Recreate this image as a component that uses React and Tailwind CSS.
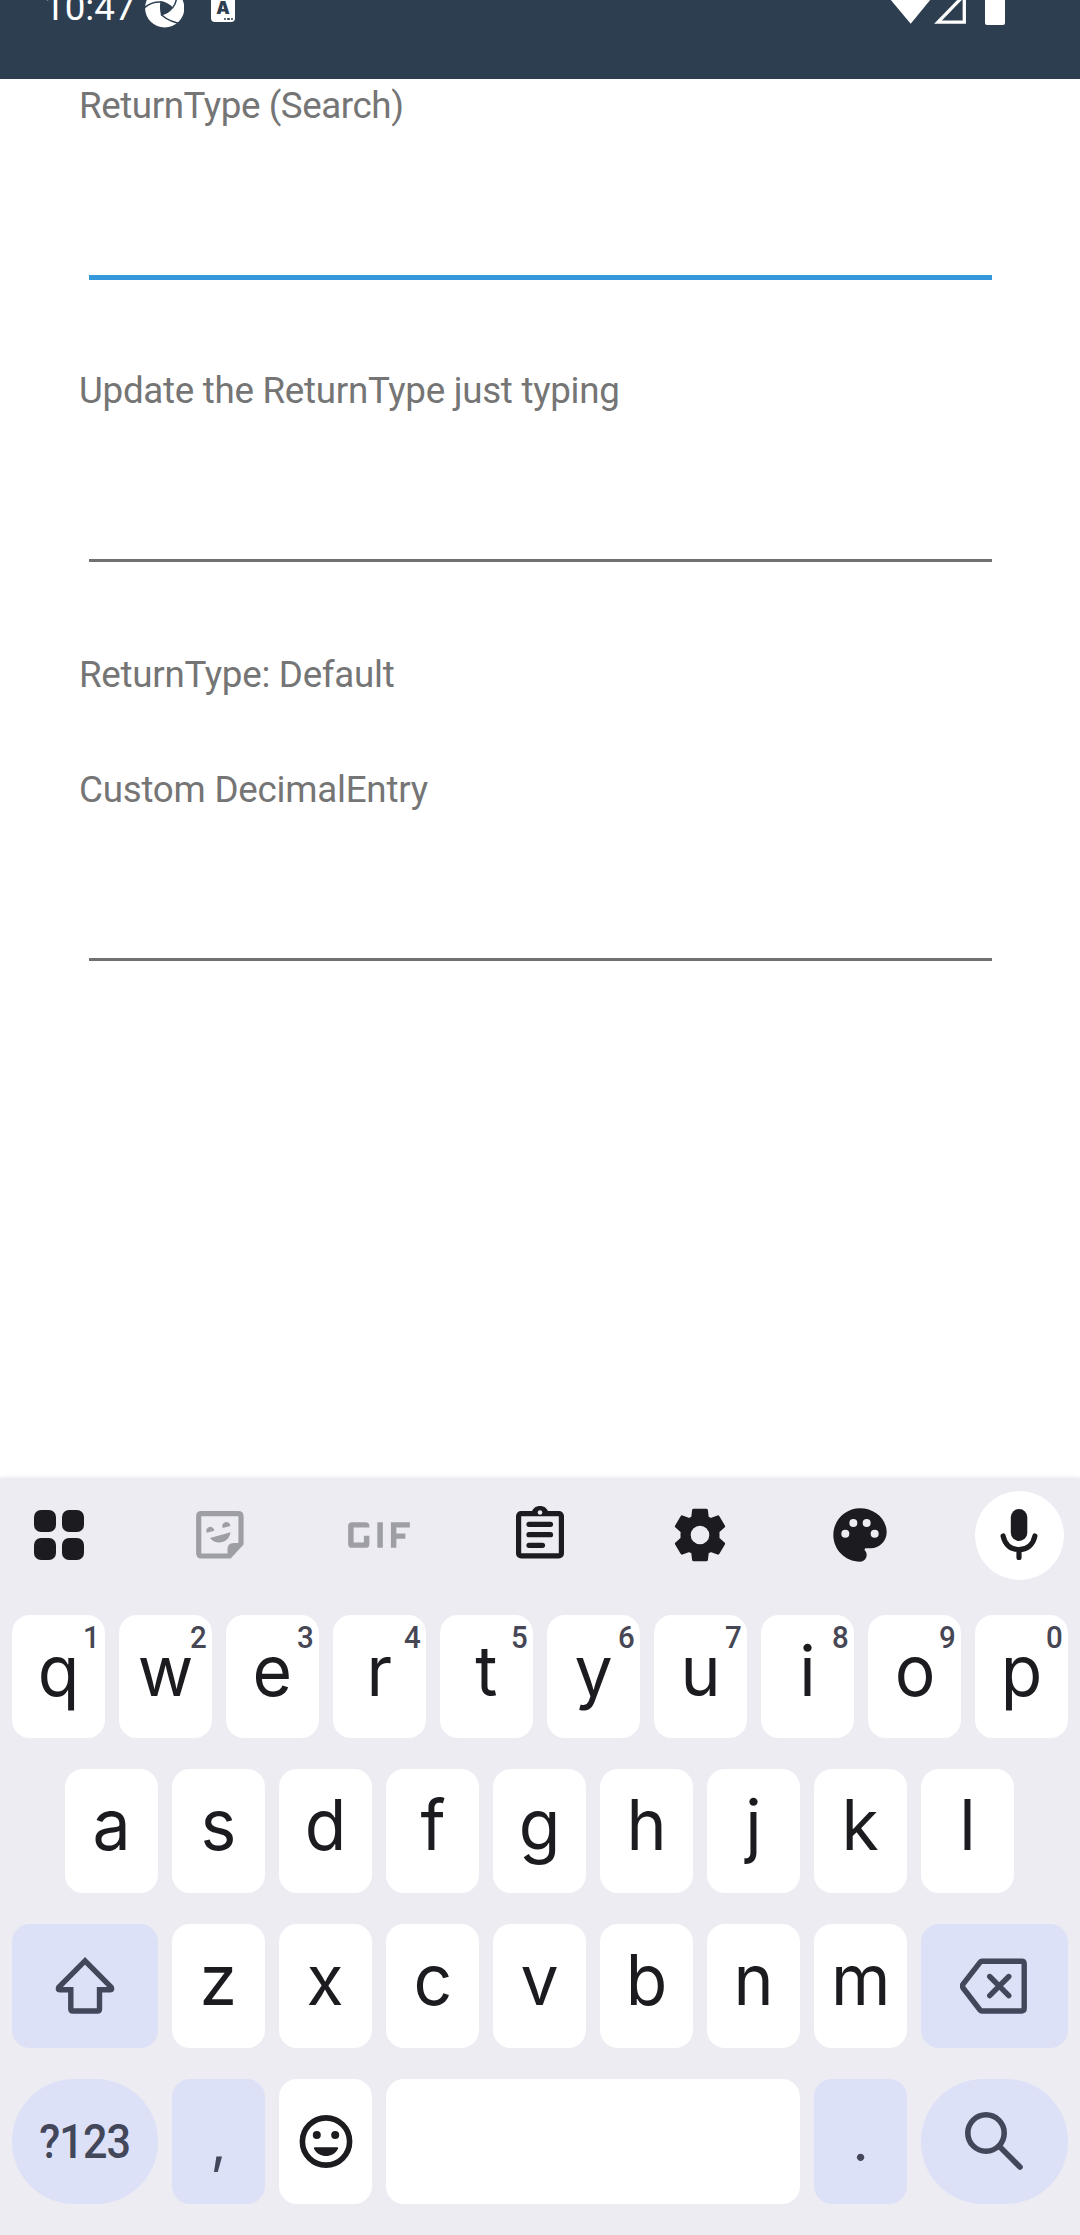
import { MdGif } from "react-icons/md";

const DARK = "#1b1b20";
const SLATE = "#43475a";
const MUTED = "#9e9fa5";

function StatusBar() {
  return (
    <header className="relative flex h-[79px] w-full shrink-0 items-start overflow-hidden bg-[#2d3e50] text-white">
      <span className="-mt-[14px] ml-[44px] w-[101px] shrink-0 text-[36.75px] leading-[43px]">10:47</span>
      <svg className="h-7 w-[39px] shrink-0" viewBox="145 0 39 28">
        <circle cx="164.7" cy="8" r="19.6" fill="#fff" />
        <g fill="none" stroke="#2d3e50" strokeWidth="1.5">
          <path d="M161 14.500 C166 19 172 23 184 24" />
          <path d="M172.500 8 C175 5 176.500 1 176.500 -3" />
          <path d="M161 2 C155 1.500 150 3 144 8" />
        </g>
        <path d="M160.500 1 C165 1.500 170 4 173 8 C170 12 166 14.500 161 15.500 C160 11 159.500 6 160.500 1 Z" fill="#2d3e50" />
      </svg>
      <div className="relative ml-[27px] h-[22px] w-6 shrink-0 overflow-hidden rounded-b-sm bg-white text-center font-[Inter,sans-serif] text-[17px] font-black leading-[16px] text-[#2d3e50]">
        <span className="block h-[17px]">A</span>
        <span className="absolute bottom-[2px] right-[2px] flex gap-[1px]">
          <i className="size-[2.500px] rounded-full bg-[#2d3e50]" />
          <i className="size-[2.500px] rounded-full bg-[#2d3e50]" />
          <i className="size-[2.500px] rounded-full bg-[#2d3e50]" />
        </span>
      </div>
      <svg className="ml-auto mr-[74px] h-[26px] w-[116px] shrink-0" viewBox="890 0 116 26">
        <path d="M890 -1 H931 L910.700 23.800 Z" fill="#fff" />
        <path d="M938 22.200 H964.300 V-5 Z" fill="none" stroke="#fff" strokeWidth="3.300" />
        <rect x="985" y="-10" width="20" height="35" rx="2" fill="#fff" />
      </svg>
    </header>
  );
}

function Grid() {
  return (
    <svg width="50" height="50" viewBox="0 0 50 50" fill={DARK}>
      <rect width="22" height="22" rx="7" />
      <rect x="28" width="22" height="22" rx="7" />
      <rect y="28" width="22" height="22" rx="7" />
      <rect x="28" y="28" width="22" height="22" rx="7" />
    </svg>
  );
}

function Sticker() {
  return (
    <svg width="48" height="48" viewBox="0 0 48 48" fill={MUTED}>
      <path d="M5.500 2.700 H42 Q45 2.700 45 5.500 V32.500 L33.500 45 H5.500 Q2.700 45 2.700 42 V5.500 Q2.700 2.700 5.500 2.700 Z" fill="none" stroke={MUTED} strokeWidth="5.200" />
      <path d="M31.500 45 V38 Q31.500 32 37.500 32 H46 L34 46 Z" />
      <path d="M10.800 21.800 A4 4 0 1 1 18.300 19.800 Z" />
      <path d="M26.800 17 A4 4 0 1 1 34.300 15 Z" />
      <path d="M14 27 L34.500 21.300 C33.500 32 20 35 14 27 Z" />
    </svg>
  );
}

function Clipboard() {
  return (
    <svg width="48" height="53" viewBox="0 0 48 53" fill="none" stroke={DARK}>
      <rect x="2.600" y="7.600" width="42.800" height="42.300" rx="2.500" strokeWidth="5.200" />
      <path d="M15.500 6.500 C17 2 20 0 24 0 C28 0 31 2 32.500 6.500 Z" fill={DARK} stroke="none" />
      <circle cx="24" cy="6.500" r="2.300" fill="#edecf3" stroke="none" />
      <path d="M13 18.300 H34.500 M13 28.700 H34.500 M13 39.300 H26.500" strokeWidth="5.200" strokeLinecap="round" />
    </svg>
  );
}

function Gear() {
  return (
    <svg width="54" height="54" viewBox="-27 -27 54 54">
      <path
        d="M-6.300 -24.700 H6.300 L7.200 -17.500 L10.500 -15.300 L18 -18 L23.500 -8.600 L17.900 -3.800 V3.800 L23.500 8.600 L18 18 L10.500 15.300 L7.200 17.500 L6.300 24.700 H-6.300 L-7.200 17.500 L-10.500 15.300 L-18 18 L-23.500 8.600 L-17.900 3.800 V-3.800 L-23.500 -8.600 L-18 -18 L-10.500 -15.300 L-7.200 -17.500 Z"
        fill={DARK}
        stroke={DARK}
        strokeWidth="3.200"
        strokeLinejoin="round"
      />
      <circle r="9.300" fill="#edecf3" />
    </svg>
  );
}

function Palette() {
  return (
    <svg width="64" height="64" viewBox="0 0 24 24" fill={DARK}>
      <path d="M12 2C6.490 2 2 6.490 2 12s4.490 10 10 10c1.380 0 2.500-1.120 2.500-2.500 0-.610-.230-1.200-.640-1.670-.080-.100-.130-.210-.130-.330 0-.280.220-.500.500-.500H16c3.310 0 6-2.690 6-6C22 6.040 17.510 2 12 2z" />
      <g fill="#edecf3">
        <circle cx="6.500" cy="11.500" r="1.500" />
        <circle cx="9.500" cy="7.500" r="1.500" />
        <circle cx="14.500" cy="7.500" r="1.500" />
        <circle cx="17.500" cy="11.500" r="1.500" />
      </g>
    </svg>
  );
}

function Mic() {
  return (
    <svg width="38" height="52" viewBox="0 0 38 52" fill="none" stroke={DARK} strokeWidth="5.200" strokeLinecap="round">
      <rect x="10.800" y="0" width="16.500" height="32" rx="8.200" fill={DARK} stroke="none" />
      <path d="M3.100 27 C5 36 11 40.500 19 40.500 C27 40.500 33 36 34.900 27 M19 41 V48.500" />
    </svg>
  );
}

function Shift() {
  return (
    <svg width="60" height="60" viewBox="55 1956 60 60" fill="none" stroke={SLATE} strokeWidth="5.400">
      <path d="M85 1960.800 L58.700 1987.300 Q57.500 1989.800 59.700 1989.800 H70.800 V2009 q0 2 2 2 H97.500 q2 0 2 -2 V1989.800 H110.300 Q112.500 1989.800 111.300 1987.300 Z" />
    </svg>
  );
}

function Backspace() {
  return (
    <svg width="70" height="60" viewBox="959.500 1956 70 60" fill="none" stroke={SLATE} strokeWidth="5.400" strokeLinecap="round" strokeLinejoin="round">
      <path d="M981.500 1961.300 H1021 Q1023.700 1961.300 1023.700 1964 V2008.300 Q1023.700 2011 1021 2011 H981.500 Q980.300 2011 979.500 2010 L962.600 1988 Q961.200 1986 962.600 1984.200 L979.500 1962.300 Q980.300 1961.300 981.500 1961.300 Z" />
      <path d="M989.200 1976.500 L1008.300 1995.700 M1008.300 1976.500 L989.200 1995.700" />
    </svg>
  );
}

function Smiley() {
  return (
    <svg width="54" height="54" viewBox="-27 -26.500 54 54" fill={DARK}>
      <circle r="23.600" fill="none" stroke={DARK} strokeWidth="5.600" />
      <circle cx="-9.200" cy="-6.500" r="4" />
      <circle cx="9.200" cy="-6.500" r="4" />
      <path d="M-11.200 5.700 H11.200 Q12.800 5.700 12 7.300 C7 17 -7 17 -12 7.300 Q-12.800 5.700 -11.200 5.700 Z" />
    </svg>
  );
}

function Search() {
  return (
    <svg width="60" height="60" viewBox="965 2112 60 60" fill="none" stroke={SLATE} strokeWidth="5.600" strokeLinecap="round">
      <circle cx="986" cy="2133" r="18.200" />
      <path d="M999.500 2146.500 L1020 2167" />
    </svg>
  );
}

function Key({ label, hint }) {
  return (
    <div className="relative flex h-full w-[93px] shrink-0 justify-center rounded-[18px] bg-white font-[Inter,sans-serif] text-[70px] leading-[112px] text-[#1b1b20]">
      <span className="inline-block origin-center scale-x-[.97]">{label}</span>
      {hint && (
        <span className="absolute right-[5px] top-[6px] origin-right scale-x-[.95] font-[Roboto,sans-serif] text-[31px] font-medium leading-[34px] text-[#464654]">{hint}</span>
      )}
    </div>
  );
}

const TOP_ROW = ["q", "w", "e", "r", "t", "y", "u", "i", "o", "p"];

function Keyboard() {
  return (
    <section className="flex h-[757px] w-full shrink-0 flex-col bg-[#edecf3] shadow-[0_0_5px_rgba(0,0,0,0.1)]">
      <div className="flex h-[114px] w-full items-center justify-between pl-[14px] pr-[16px]">
        <div className="flex w-[89px] justify-center"><Grid /></div>
        <div className="flex w-[89px] justify-center pl-[2px]"><Sticker /></div>
        <div className="flex w-[89px] justify-center"><MdGif className="size-[108px] shrink-0" color={MUTED} stroke="#edecf3" style={{ strokeWidth: 0.28 }} /></div>
        <div className="flex w-[89px] justify-center pb-[5px] pl-[2px]"><Clipboard /></div>
        <div className="flex w-[89px] justify-center pl-[2px]"><Gear /></div>
        <div className="flex w-[89px] justify-center pl-[1px]"><Palette /></div>
        <div className="flex size-[89px] items-center justify-center rounded-full bg-white"><Mic /></div>
      </div>
      <div className="mt-[23px] flex h-[123px] gap-[14px] px-[12px]">
        {TOP_ROW.map((k, i) => (
          <Key key={k} label={k} hint={String((i + 1) % 10)} />
        ))}
      </div>
      <div className="mt-[31px] flex h-[124px] gap-[14px] pl-[65px]">
        {["a", "s", "d", "f", "g", "h", "j", "k", "l"].map((k) => (
          <Key key={k} label={k} />
        ))}
      </div>
      <div className="mt-[31px] flex h-[124px] gap-[14px] px-[12px]">
        <div className="flex w-[146px] items-center justify-center rounded-[18px] bg-[#dde1f8]"><Shift /></div>
        {["z", "x", "c", "v", "b", "n", "m"].map((k) => (
          <Key key={k} label={k} />
        ))}
        <div className="flex w-[147px] items-center justify-center rounded-[18px] bg-[#dde1f8]"><Backspace /></div>
      </div>
      <div className="mt-[31px] flex h-[125px] gap-[14px] px-[12px] text-[#43475a]">
        <div className="flex w-[146px] items-center justify-center rounded-[62px] bg-[#dde1f8] text-[49px] font-medium leading-[60px] tracking-[-1px]">
          <span className="inline-block scale-x-[.88]">?123</span>
        </div>
        <div className="flex w-[93px] justify-center rounded-[18px] bg-[#dde1f8] font-[Inter,sans-serif] text-[56px] leading-[127px]">,</div>
        <div className="flex w-[93px] items-center justify-center rounded-[18px] bg-white"><Smiley /></div>
        <div className="w-[414px] rounded-[18px] bg-white" />
        <div className="flex w-[93px] justify-center rounded-[18px] bg-[#dde1f8] font-[Inter,sans-serif] text-[56px] leading-[125px]">.</div>
        <div className="flex w-[147px] items-center justify-center rounded-[62px] bg-[#dde1f8]"><Search /></div>
      </div>
    </section>
  );
}

export default function App() {
  return (
    <div className="flex h-[2235px] w-[1080px] flex-col overflow-hidden bg-white font-[Roboto,sans-serif]">
      <StatusBar />
      <main className="flex flex-1 flex-col pl-[79px] pr-[78px] pt-[5px] text-[36.75px] leading-[43px] tracking-[-0.290px] text-[#757575]">
        <p className="tracking-[-0.430px]">ReturnType (Search)</p>
        <div className="mx-[10px] mt-[148px] h-[5px] bg-[#3498db]" />
        <p className="mt-[89px]">Update the ReturnType just typing</p>
        <div className="mx-[10px] mt-[147px] h-[3px] bg-[#717171]" />
        <p className="mt-[91px]">ReturnType: Default</p>
        <p className="mt-[72px] tracking-[-0.240px]">Custom DecimalEntry</p>
        <div className="mx-[10px] mt-[147px] h-[3px] bg-[#717171]" />
      </main>
      <Keyboard />
    </div>
  );
}
